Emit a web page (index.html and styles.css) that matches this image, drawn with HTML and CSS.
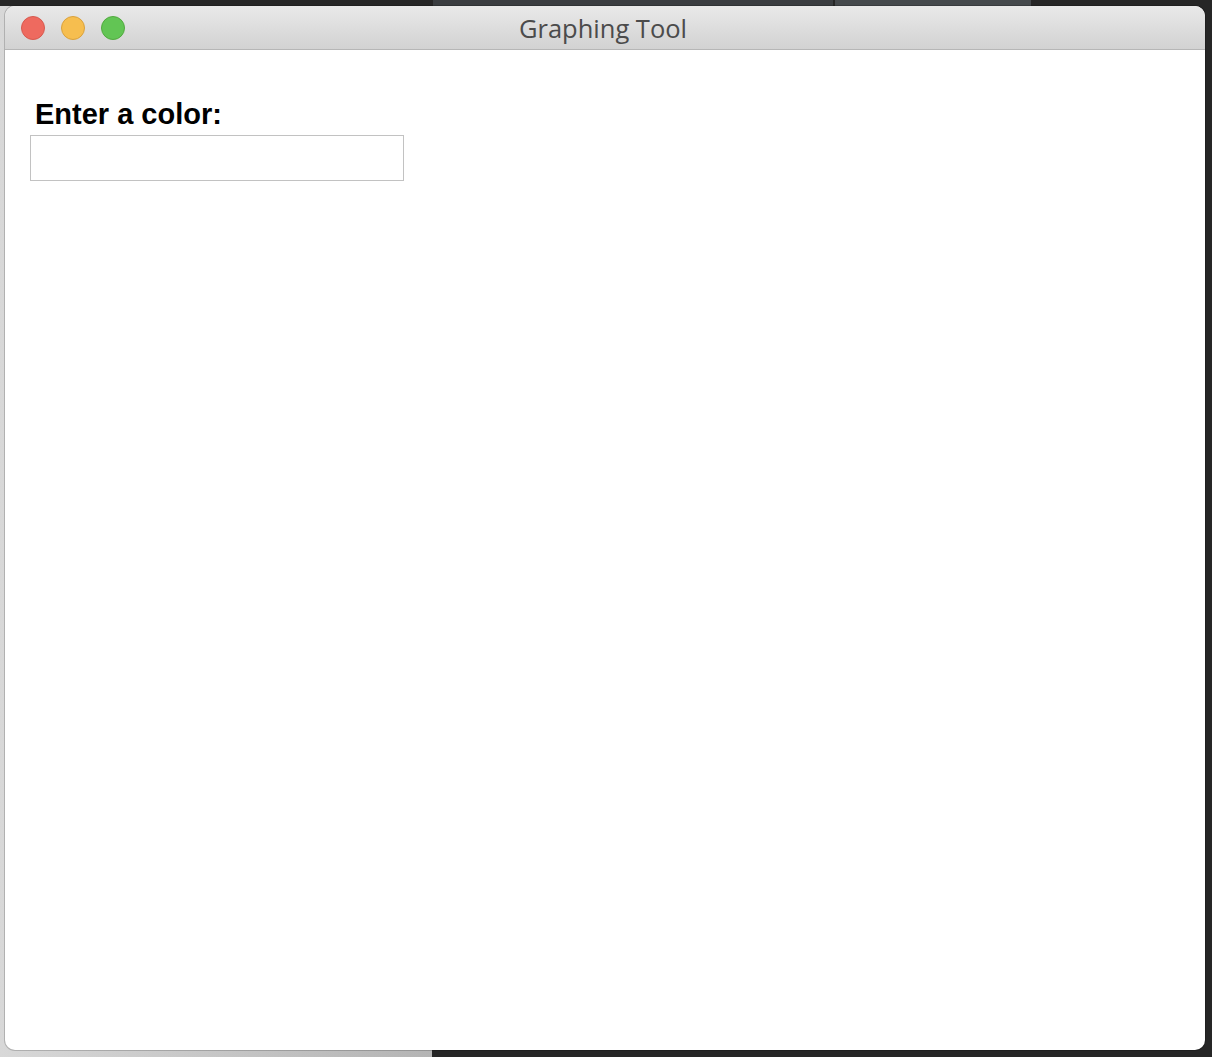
FILE: index.html
```html
<!DOCTYPE html>
<html>
<head>
<meta charset="utf-8">
<title>Graphing Tool</title>
<link rel="stylesheet" href="styles.css">
</head>
<body>
<div class="desktop">
  <div class="window">
    <div class="titlebar">
      <div class="lights">
        <span class="light red"></span>
        <span class="light yellow"></span>
        <span class="light green"></span>
      </div>
      <div class="title">Graphing Tool</div>
    </div>
    <div class="content">
      <h1 class="label">Enter a color:</h1>
      <input class="field" type="text">
    </div>
  </div>
</div>
</body>
</html>
```
FILE: styles.css
```css
html, body {
  margin: 0;
  padding: 0;
  width: 1212px;
  height: 1057px;
  overflow: hidden;
}
body {
  background-color: #262626;
  background-image:
    linear-gradient(#45494c, #45494c),
    linear-gradient(#3a3d40, #3a3d40),
    linear-gradient(90deg, #d8d8d8, #b4b4b4);
  background-size: 196px 6px, 400px 6px, 432px 1051px;
  background-position: 835px 0, 433px 0, 0 6px;
  background-repeat: no-repeat;
}
.desktop {
  box-sizing: border-box;
  width: 1212px;
  height: 1057px;
  padding: 6px 7px 7px 5px;
}
.window {
  box-sizing: border-box;
  width: 1200px;
  height: 1044px;
  background: #ffffff;
  border-radius: 10px;
  overflow: hidden;
  display: flex;
  flex-direction: column;
  box-shadow: 0 0 0 1px rgba(0,0,0,0.18);
}
.titlebar {
  position: relative;
  flex: 0 0 auto;
  height: 43px;
  background: linear-gradient(#e9e9e9, #d2d2d2);
  border-bottom: 1px solid #b6b6b6;
  display: flex;
  align-items: center;
  justify-content: center;
}
.lights {
  position: absolute;
  left: 16px;
  top: 10px;
  display: flex;
  gap: 16px;
}
.light {
  box-sizing: border-box;
  width: 24px;
  height: 24px;
  border-radius: 50%;
  display: block;
}
.red { background: #ee6a5f; border: 1px solid #d65a4f; }
.yellow { background: #f6be4f; border: 1px solid #d9a13d; }
.green { background: #62c554; border: 1px solid #52a93f; }
.title {
  font-family: "Open Sans", "Liberation Sans", sans-serif;
  font-size: 25.5px;
  color: #4b4b4b;
  line-height: 43px;
  margin-left: -4px;
  margin-top: 1px;
}
.content {
  flex: 1 1 auto;
  padding: 47px 0 0 25px;
  display: flex;
  flex-direction: column;
  align-items: flex-start;
}
.label {
  margin: 0;
  padding-left: 5px;
  font-family: "Liberation Sans", Arial, sans-serif;
  font-weight: bold;
  font-size: 29px;
  line-height: 34px;
  color: #000000;
}
.field {
  box-sizing: border-box;
  margin: 4px 0 0 0;
  width: 374px;
  height: 46px;
  border: 1px solid #c2c2c2;
  border-radius: 0;
  background: #ffffff;
  padding: 0 6px;
  font-family: "Liberation Sans", Arial, sans-serif;
  font-size: 18px;
  outline: none;
}
```
